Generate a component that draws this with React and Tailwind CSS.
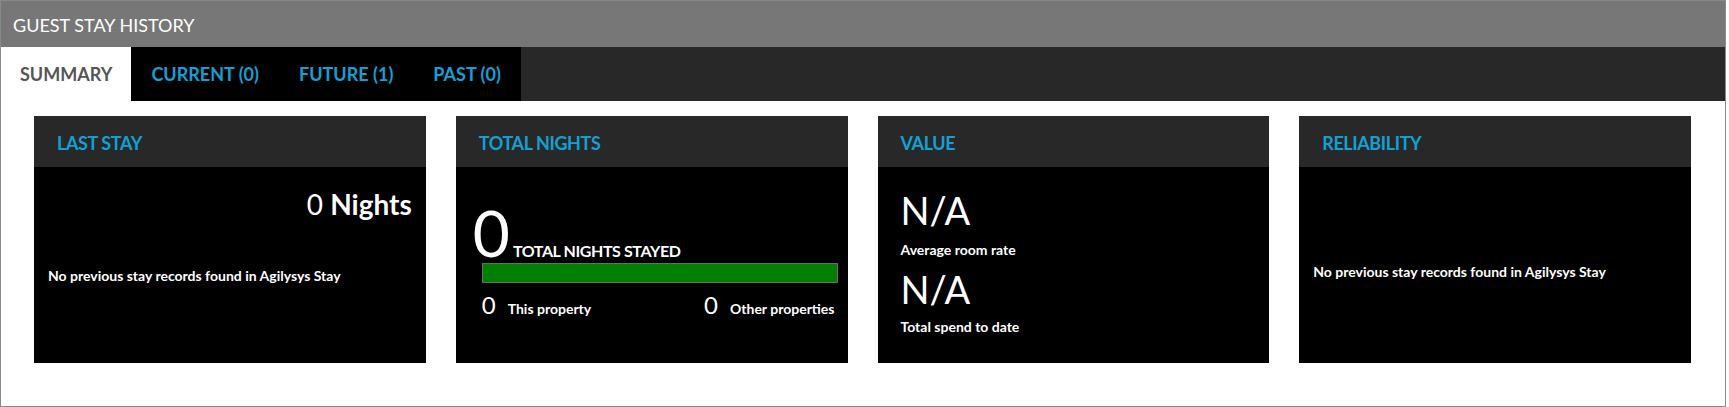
import React from 'react';

const tabs = [
  { label: 'SUMMARY', active: true },
  { label: 'CURRENT (0)' },
  { label: 'FUTURE (1)' },
  { label: 'PAST (0)' },
];

function Card({ title, children, bodyClass = '' }) {
  return (
    <div className="flex h-[247px] flex-col bg-black">
      <div className="flex h-[51px] shrink-0 items-center bg-[#282828] pl-[23px] pt-[3px]">
        <h3 className="text-[18px] font-bold tracking-[-0.4px] text-[#0fa2d3]">{title}</h3>
      </div>
      <div className={`flex-1 text-white ${bodyClass}`}>{children}</div>
    </div>
  );
}

export default function App() {
  return (
    <div className="flex h-[407px] w-[1726px] flex-col border border-[#8a8a8a] bg-white font-[Lato,sans-serif]">
      <div className="flex h-[46px] shrink-0 items-center bg-[#777777] pl-[12px] pt-[2px] text-[18px] text-white">
        GUEST STAY HISTORY
      </div>

      <div className="flex h-[54px] shrink-0 bg-[#282828]">
        {tabs.map((tab) => (
          <button
            key={tab.label}
            type="button"
            className={
              tab.active
                ? 'flex items-center bg-white px-[19px] text-[18px] font-bold text-[#555555]'
                : 'flex items-center bg-black px-[20px] text-[18px] font-bold text-[#0fa2d3]'
            }
          >
            {tab.label}
          </button>
        ))}
      </div>

      <div className="grid grid-cols-4 gap-[30px] pl-[33px] pr-[34px] pt-[15px]">
        <Card title="LAST STAY" bodyClass="px-[14px] pt-[23px]">
          <p className="text-right text-[28px] leading-none">
            0 <span className="font-bold">Nights</span>
          </p>
          <p className="mt-[48px] text-[14px] font-bold leading-5">
            No previous stay records found in Agilysys Stay
          </p>
        </Card>

        <Card title="TOTAL NIGHTS" bodyClass="pl-[26px] pr-[10px] pt-[37px]">
          <div className="flex items-baseline">
            <span className="-ml-[9px] text-[64px] leading-[58px]">0</span>
            <span className="ml-[3px] text-[16px] font-bold tracking-[-0.4px]">TOTAL NIGHTS STAYED</span>
          </div>
          <div className="h-[20px] border border-[#6b6b6b] bg-[#008000]" />
          <div className="mt-[10px] flex items-baseline justify-between pr-[3px]">
            <div className="flex items-baseline">
              <span className="text-[24px] leading-none">0</span>
              <span className="ml-[12px] text-[14px] font-bold">This property</span>
            </div>
            <div className="flex items-baseline">
              <span className="text-[24px] leading-none">0</span>
              <span className="ml-[12px] text-[14px] font-bold">Other properties</span>
            </div>
          </div>
        </Card>

        <Card title="VALUE" bodyClass="pl-[23px] pt-[24px]">
          <p className="text-[38px] leading-none">N/A</p>
          <p className="mt-[11px] text-[14px] font-bold leading-5">Average room rate</p>
          <p className="mt-[10px] text-[38px] leading-none">N/A</p>
          <p className="mt-[9px] text-[14px] font-bold leading-5">Total spend to date</p>
        </Card>

        <Card title="RELIABILITY" bodyClass="px-[14px] pt-[95px]">
          <p className="text-[14px] font-bold leading-5">
            No previous stay records found in Agilysys Stay
          </p>
        </Card>
      </div>
    </div>
  );
}
